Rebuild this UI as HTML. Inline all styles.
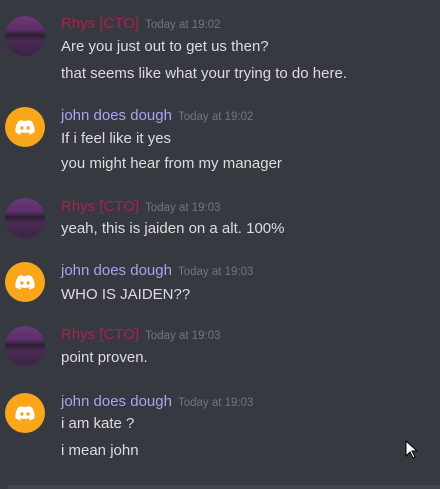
<!DOCTYPE html>
<html><head><style>
body{margin:0;width:440px;height:488px;background:#36393f;font-family:"Liberation Sans",sans-serif;position:relative;overflow:hidden}
.a{position:absolute;left:5px;width:40px;height:40px;border-radius:50%}
.r{background:linear-gradient(180deg,#6b3a78 0%,#5a2d68 35%,#2b2030 48%,#4a2a55 62%,#3a2343 100%)}
.d{background:#faa61a}
.t{position:absolute;left:61px;font-size:15px;color:#dcddde;white-space:nowrap;line-height:16px}
.n{position:absolute;left:61px;font-size:15px;white-space:nowrap;line-height:16px}
.n span{font-size:11.5px;color:#72767d;margin-left:6px}
.rc{color:#a8224f}.jc{color:#a4a6f1}
</style></head><body>
<svg width="0" height="0" style="position:absolute"><defs><symbol id="dl" viewBox="0 0 24 18"><path fill="#fff" d="M20 1.5A19 19 0 0 0 15.3 0l-.6 1.2a18 18 0 0 0-5.4 0L8.7 0A19 19 0 0 0 4 1.5C1 6 .2 10.3.6 14.6A19 19 0 0 0 6.4 17.5l1.2-2a12 12 0 0 1-1.9-.9l.5-.4a13.6 13.6 0 0 0 11.6 0l.5.4a12 12 0 0 1-1.9.9l1.2 2a19 19 0 0 0 5.8-2.9c.5-5-.8-9.3-3.4-13.1zM8.3 11.9c-1.1 0-2-1-2-2.3s.9-2.3 2-2.3 2 1 2 2.3-.9 2.3-2 2.3zm7.4 0c-1.1 0-2-1-2-2.3s.9-2.3 2-2.3 2 1 2 2.3-.9 2.3-2 2.3z"/></symbol></defs></svg>

<div class="a r" style="top:16px"></div>
<div class="n rc" style="top:16px">Rhys [CTO]<span>Today at 19:02</span></div>
<div class="t" style="top:39px">Are you just out to get us then?</div>
<div class="t" style="top:66px">that seems like what your trying to do here.</div>

<div class="a d" style="top:107px"><svg style="position:absolute;left:10px;top:13px" width="20" height="15"><use href="#dl"/></svg></div>
<div class="n jc" style="top:108px">john does dough<span>Today at 19:02</span></div>
<div class="t" style="top:131px">If i feel like it yes</div>
<div class="t" style="top:156px">you might hear from my manager</div>

<div class="a r" style="top:198px"></div>
<div class="n rc" style="top:199px">Rhys [CTO]<span>Today at 19:03</span></div>
<div class="t" style="top:221px">yeah, this is jaiden on a alt. 100%</div>

<div class="a d" style="top:262px"><svg style="position:absolute;left:10px;top:13px" width="20" height="15"><use href="#dl"/></svg></div>
<div class="n jc" style="top:263px">john does dough<span>Today at 19:03</span></div>
<div class="t" style="top:287px">WHO IS JAIDEN??</div>

<div class="a r" style="top:326px"></div>
<div class="n rc" style="top:327px">Rhys [CTO]<span>Today at 19:03</span></div>
<div class="t" style="top:350px">point proven.</div>

<div class="a d" style="top:393px"><svg style="position:absolute;left:10px;top:13px" width="20" height="15"><use href="#dl"/></svg></div>
<div class="n jc" style="top:394px">john does dough<span>Today at 19:03</span></div>
<div class="t" style="top:416px">i am kate ?</div>
<div class="t" style="top:443px">i mean john</div>

<svg style="position:absolute;left:405px;top:440px" width="12" height="19"><path d="M1 1v15l4-4 3 6 2-1-3-6h5z" fill="#fff" stroke="#000"/></svg>
<div style="position:absolute;left:7px;top:485px;width:440px;height:4px;background:#40444b;border-radius:4px"></div>
</body></html>
